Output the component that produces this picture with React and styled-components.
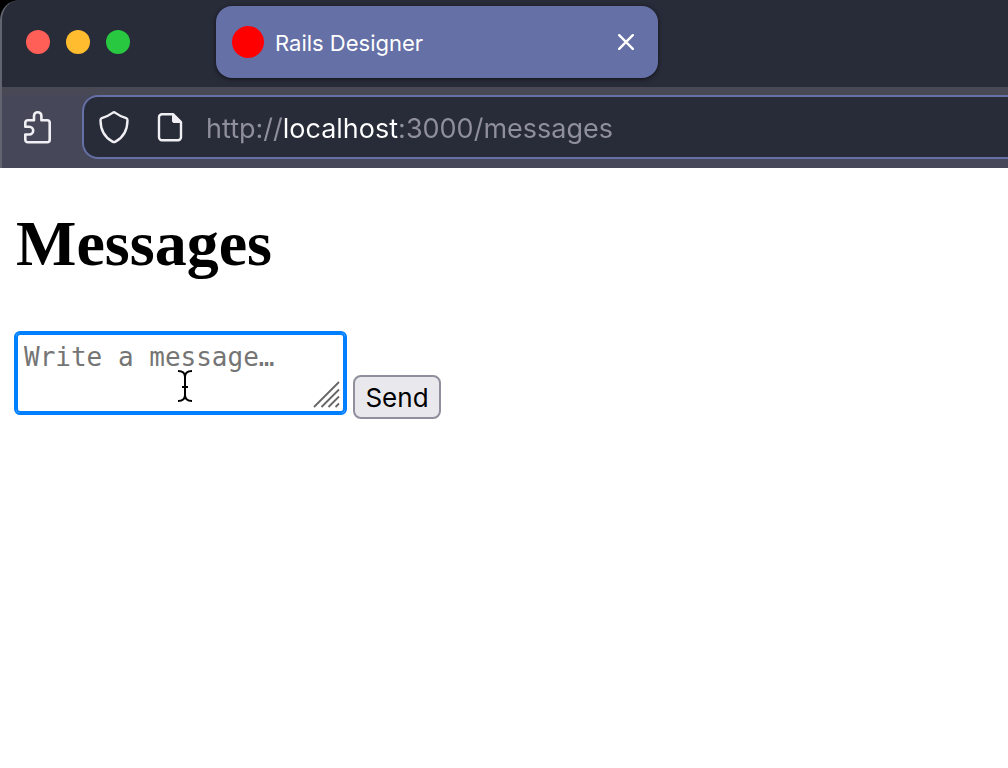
import React, { useState } from 'react';
import styled, { createGlobalStyle } from 'styled-components';

const GlobalStyle = createGlobalStyle`
  * {
    box-sizing: border-box;
  }
  body {
    margin: 0;
    background: #fff;
  }
`;

const sans = `Inter, 'Liberation Sans', sans-serif`;

const Chrome = styled.header`
  background: #000;
`;

const Frame = styled.div`
  overflow: hidden;
  border-left: 2px solid #62646f;
  border-top-left-radius: 20px;
  background: #282b38;
`;

const TabBar = styled.div`
  display: flex;
  align-items: center;
  gap: 86px;
  height: 87px;
  padding: 0 24px 3px;
`;

const Lights = styled.div`
  display: flex;
  gap: 16px;
`;

const Light = styled.button`
  width: 24px;
  height: 24px;
  padding: 0;
  border: 0;
  border-radius: 50%;
  background: ${(props) => props.$color};
`;

const Tab = styled.div`
  display: flex;
  align-items: center;
  gap: 11px;
  flex: 0 1 442px;
  height: 72px;
  padding: 0 16px;
  border-radius: 16px;
  background: #6470a6;
  box-shadow: 0 1px 4px rgba(0, 0, 0, 0.6);
  color: #fff;
  font: 22px/32px ${sans};
`;

const Favicon = styled.span`
  width: 32px;
  height: 32px;
  border-radius: 50%;
  background: #f00;
`;

const TabTitle = styled.span`
  flex: 1;
  padding-top: 2px;
`;

const IconButton = styled.button`
  display: flex;
  align-items: center;
  justify-content: center;
  width: 32px;
  height: 40px;
  flex: none;
  padding: 0;
  border: 0;
  background: none;
  color: #f0f0f4;
`;

const Toolbar = styled.div`
  display: flex;
  align-items: center;
  gap: 28px;
  height: 81px;
  padding: 0 0 2px 20px;
  background: #464859;
  box-shadow: inset 0 8px #484955;
`;

const AddressBar = styled.div`
  display: flex;
  align-items: center;
  gap: 24px;
  flex: 1;
  height: 64px;
  padding-left: 14px;
  border: 2px solid #6470a6;
  border-right: 0;
  border-radius: 16px 0 0 16px;
  background: #282b38;
`;

/* the host is drawn brighter than the rest of the address */
const Address = styled.input`
  flex: 1;
  min-width: 0;
  height: 44px;
  margin-left: -4px;
  padding: 4px 0 0;
  border: 0;
  outline: 0;
  background: linear-gradient(
    90deg,
    #8f909c 76px,
    #fff 76px,
    #fff 192px,
    #8f909c 192px
  );
  background-clip: text;
  color: transparent;
  caret-color: #fff;
  font: 27px/40px ${sans};
`;

const Page = styled.main`
  padding: 39px 16px;
`;

const Title = styled.h1`
  margin: 0 0 52px;
  color: #000;
  font: bold 64px/74px 'Liberation Serif', serif;
`;

const Form = styled.form`
  display: flex;
  align-items: flex-end;
  gap: 8px;
`;

const Field = styled.label`
  position: relative;
  display: flex;
  flex: 0 1 329px;
  margin-bottom: 6px;
`;

const Message = styled.textarea`
  width: 100%;
  height: 80px;
  padding: 6px;
  border: 2px solid #007fff;
  border-radius: 4px;
  outline: 2px solid #007fff;
  background: #fff;
  color: #000;
  font: 26px/32px 'DejaVu Sans Mono', monospace;
  resize: none;

  &::placeholder {
    color: #757575;
    opacity: 1;
  }
`;

const Grip = styled.svg`
  position: absolute;
  right: 5px;
  bottom: 5px;
  pointer-events: none;
`;

const Cursor = styled.svg`
  position: absolute;
  left: 161px;
  top: 36px;
  pointer-events: none;
`;

const SendButton = styled.button`
  min-width: 88px;
  height: 44px;
  padding: 2px 8px 0;
  border: 2px solid #8f8f9d;
  border-radius: 8px;
  background: #e9e9ed;
  color: #000;
  font: 26px/38px ${sans};
`;

function CloseIcon() {
  return (
    <svg width='16' height='16' viewBox='0 0 16 16' fill='none' stroke='#fff' strokeWidth='2.4' strokeLinecap='round'>
      <path d='M1.200 1.200l13.600 13.600M14.800 1.200L1.200 14.800' />
    </svg>
  );
}

function ExtensionIcon() {
  return (
    <svg width='30' height='34' viewBox='0 0 30 34' fill='none' stroke='currentColor' strokeWidth='2.6' strokeLinejoin='round'>
      <path d='M4.800 10.300H11V5.900a3.700 3.700 0 0 1 7.400 0v4.400h5.800a2.500 2.500 0 0 1 2.500 2.500v17a2.500 2.500 0 0 1-2.500 2.500H4.800a2.500 2.500 0 0 1-2.500-2.500V24.500h4a3.900 3.900 0 0 0 0-7.800h-4v-3.900a2.500 2.500 0 0 1 2.500-2.500z' />
    </svg>
  );
}

function ShieldIcon() {
  return (
    <svg width='32' height='34' viewBox='0 0 32 34' fill='none' stroke='currentColor' strokeWidth='2.4' strokeLinejoin='round'>
      <path d='M15 2.600q1-.6 2 0C20 4.800 24 6.800 28.200 8.200q1.300.5 1.300 2C29.400 19 26 27 17.500 31.600q-1.500.8-3 0C6 27 2.600 19 2.500 10.200q0-1.500 1.300-2C8 6.800 12 4.800 15 2.600z' />
    </svg>
  );
}

function PageIcon() {
  return (
    <svg width='26' height='30' viewBox='0 0 26 30' fill='none' stroke='currentColor' strokeWidth='2.400' strokeLinejoin='round'>
      <path d='M5 2.200H16l8 8v15a3 3 0 0 1-3 3H5a3 3 0 0 1-3-3v-20a3 3 0 0 1 3-3z' />
      <path d='M15.500 2v7a1.500 1.500 0 0 0 1.500 1.500h7z' fill='currentColor' strokeWidth='1' />
    </svg>
  );
}

function App() {
  const [url, setUrl] = useState('http://localhost:3000/messages');
  const [message, setMessage] = useState('');

  return (
    <>
      <GlobalStyle />
      <Chrome>
        <Frame>
          <TabBar>
            <Lights>
              <Light $color='#ff5f57' aria-label='Close window' />
              <Light $color='#febc2e' aria-label='Minimize window' />
              <Light $color='#28c840' aria-label='Zoom window' />
            </Lights>
            <Tab>
              <Favicon />
              <TabTitle>Rails Designer</TabTitle>
              <IconButton aria-label='Close tab'>
                <CloseIcon />
              </IconButton>
            </Tab>
          </TabBar>
          <Toolbar>
            <IconButton aria-label='Extensions'>
              <ExtensionIcon />
            </IconButton>
            <AddressBar>
              <IconButton aria-label='Tracking protection'>
                <ShieldIcon />
              </IconButton>
              <IconButton aria-label='Site information'>
                <PageIcon />
              </IconButton>
              <Address
                aria-label='Address'
                value={url}
                spellCheck={false}
                onChange={(e) => setUrl(e.target.value)}
              />
            </AddressBar>
          </Toolbar>
        </Frame>
      </Chrome>

      <Page>
        <Title>Messages</Title>
        <Form onSubmit={(e) => e.preventDefault()}>
          <Field>
            <Message
              aria-label='Message'
              placeholder='Write a message…'
              value={message}
              onChange={(e) => setMessage(e.target.value)}
            />
            <Grip width='27' height='27' viewBox='0 0 27 27' stroke='#666' strokeWidth='1.800'>
              <path d='M1 26L26 1M8.500 26L26 8.500M15.500 26L26 15.500M22.500 26l3.500-3.500' />
            </Grip>
            <Cursor width='16' height='34' viewBox='0 0 16 34' fill='none' stroke='#000' strokeWidth='2'>
              <path d='M1 2q7 0 7 6v18q0 6-7 6M15 2q-7 0-7 6M8 26q0 6 7 6M5 18h6' />
            </Cursor>
          </Field>
          <SendButton type='submit'>Send</SendButton>
        </Form>
      </Page>
    </>
  );
}

export default App;
